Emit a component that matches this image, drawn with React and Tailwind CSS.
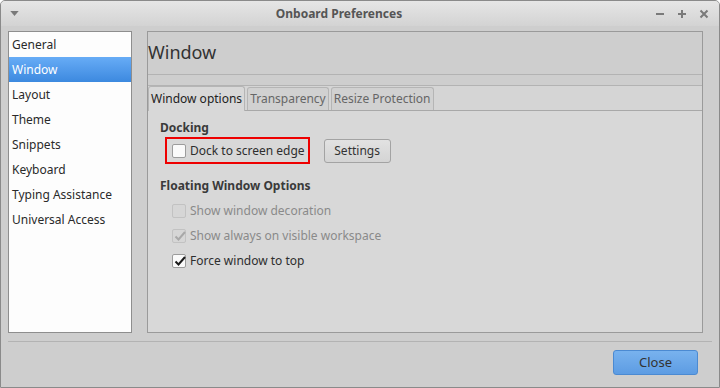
import React from "react";

const font = { fontFamily: '"Noto Sans", "Open Sans", sans-serif' };

function Check({ checked, disabled }) {
  return (
    <span
      className={`relative inline-block shrink-0 w-[14px] h-[14px] rounded-[2px] border ${
        disabled ? "bg-[#d6d6d6] border-[#c2c2c2]" : "bg-[#fafafa] border-[#9c9c9c]"
      }`}
    >
      {checked && (
        <svg viewBox="0 0 14 14" className="absolute left-[0px] top-[-1px] w-[14px] h-[14px]">
          <polyline
            points="2.5,7.5 5.5,10.5 12,3"
            fill="none"
            stroke={disabled ? "#a8a8a8" : "#1a1a1a"}
            strokeWidth="2"
          />
        </svg>
      )}
    </span>
  );
}

function Option({ label, checked, disabled }) {
  return (
    <div className="flex items-center gap-[4px] h-[25px] pl-[12px]">
      <Check checked={checked} disabled={disabled} />
      <span className={disabled ? "text-[#8a8a8a]" : "text-[#2e2e2e]"}>{label}</span>
    </div>
  );
}

export default function App() {
  const items = ["General", "Window", "Layout", "Theme", "Snippets", "Keyboard", "Typing Assistance", "Universal Access"];
  return (
    <div style={font} className="w-[720px] h-[388px] bg-[#cecece] border border-[#8a8a8a] rounded-t-[5px] flex flex-col text-[12px] overflow-hidden">
      {/* title bar */}
      <div className="h-[25px] bg-gradient-to-b from-[#e6e6e6] to-[#d3d3d3] flex items-center px-[9px]">
        <svg viewBox="0 0 10 6" className="w-[9px] h-[5px]">
          <polygon points="0,0 10,0 5,6" fill="#7a7a7a" />
        </svg>
        <div className="flex-1 text-center font-bold text-[#555] text-[12px] ml-[4px]">Onboard Preferences</div>
        <div className="flex items-center gap-[12px] mr-[1px]">
          <svg viewBox="0 0 10 10" className="w-[10px] h-[10px]"><rect x="1" y="4" width="8" height="2" fill="#7a7a7a" /></svg>
          <svg viewBox="0 0 10 10" className="w-[10px] h-[10px]"><rect x="1" y="4" width="8" height="2" fill="#7a7a7a" /><rect x="4" y="1" width="2" height="8" fill="#7a7a7a" /></svg>
          <svg viewBox="0 0 10 10" className="w-[10px] h-[10px]"><path d="M1.5 1.5 L8.5 8.5 M8.5 1.5 L1.5 8.5" stroke="#7a7a7a" strokeWidth="2" /></svg>
        </div>
      </div>

      {/* main */}
      <div className="flex gap-[15px] pl-[7px] pr-[16px] pt-[5px] h-[307px]">
        <div className="w-[124px] bg-[#fdfdfd] border border-[#8e8e8e] flex flex-col">
          {items.map((it) => (
            <div
              key={it}
              className={`h-[25px] flex items-center pl-[3px] ${
                it === "Window" ? "bg-gradient-to-b from-[#67acf6] to-[#3c89df] text-white" : "text-[#2a2a2a]"
              }`}
            >
              {it}
            </div>
          ))}
        </div>

        <div className="flex-1 flex flex-col border-l border-t border-r border-[#9a9a9a]">
          <div className="h-[43px] border-b border-[#b3b3b3] flex items-center text-[18px] text-[#333] leading-none pb-[2px]">
            Window
          </div>
          <div className="h-[11px] border-b border-[#b3b3b3]" />
          <div className="flex-1 flex flex-col bg-[#d8d8d8] border-b border-[#9a9a9a]">
            <div className="h-[25px] flex items-end bg-[#d5d5d5] border-b border-[#a8a8a8] gap-[2px]">
              <div className="h-[25px] -mb-[1px] bg-[#d8d8d8] border border-b-0 border-[#b5b5b5] rounded-t-[3px] px-[2px] flex items-center text-[#222]">
                Window options
              </div>
              <div className="h-[23px] bg-[#d1d1d1] border border-b-0 border-[#b5b5b5] rounded-t-[3px] px-[2px] flex items-center text-[#666]">
                Transparency
              </div>
              <div className="h-[23px] bg-[#d1d1d1] border border-b-0 border-[#b5b5b5] rounded-t-[3px] px-[2px] flex items-center text-[#666]">
                Resize Protection
              </div>
            </div>
            <div className="pl-[12px] pt-[8px] flex flex-col">
              <div className="font-bold text-[#3a3a3a] h-[18px] flex items-center">Docking</div>
              <div className="flex items-center gap-[14px]">
                <div className="ml-[5px] h-[27px] border-2 border-[#ee0000] flex items-center gap-[4px] pl-[5px] pr-[3px] whitespace-nowrap">
                  <Check />
                  <span className="text-[#2e2e2e]">Dock to screen edge</span>
                </div>
                <div className="w-[67px] h-[24px] rounded-[3px] border border-[#a3a3a3] bg-gradient-to-b from-[#e2e2e2] to-[#d4d4d4] flex items-center justify-center text-[#333]">
                  Settings
                </div>
              </div>
              <div className="font-bold text-[#3a3a3a] h-[18px] flex items-center mt-[13px]">Floating Window Options</div>
              <div className="mt-[3px]">
                <Option label="Show window decoration" disabled />
                <Option label="Show always on visible workspace" checked disabled />
                <Option label="Force window to top" checked />
              </div>
            </div>
          </div>
        </div>
      </div>

      {/* footer */}
      <div className="mx-[7px] mt-[8px] border-t border-[#b3b3b3]" />
      <div className="flex justify-end pr-[21px] pt-[8px]">
        <div className="w-[85px] h-[25px] rounded-[3px] border border-[#4b8ad2] bg-gradient-to-b from-[#78b2ee] to-[#5d9ce3] flex items-center justify-center text-[#333] text-[13px]">
          Close
        </div>
      </div>
    </div>
  );
}
